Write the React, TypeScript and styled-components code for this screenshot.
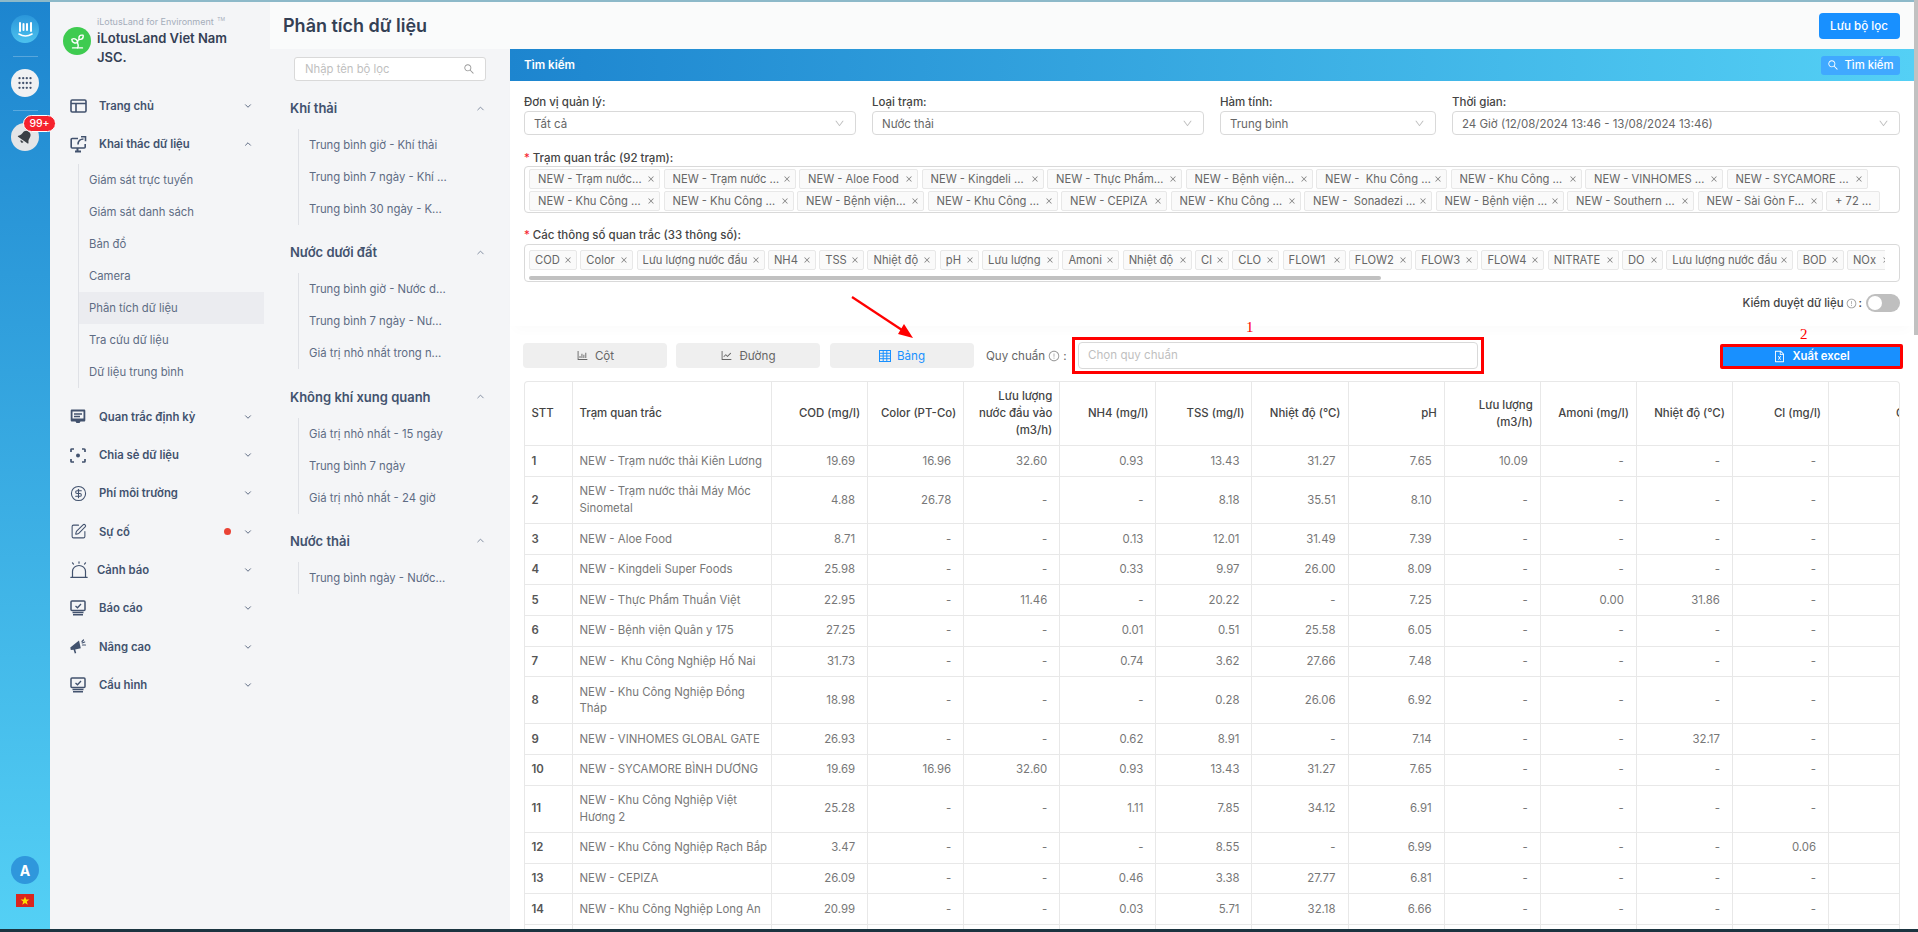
import React from "react";
import styled, { createGlobalStyle } from "styled-components";
import { ChevronDown, ChevronUp, CircleDollarSign, SquarePen, Sprout } from "lucide-react";
import {
  AiOutlineBarChart,
  AiOutlineLineChart,
  AiOutlineSearch,
  AiOutlineClose,
  AiOutlineDown,
  AiOutlineExclamationCircle,
  AiOutlineFileExcel,
} from "react-icons/ai";

const GlobalStyle = createGlobalStyle`
  html, body { margin: 0; padding: 0; height: 100%; overflow: hidden; background: #fff; }
  body { font-family: Inter, "Noto Sans", sans-serif; font-size: 11.6px; color: #444; }
  * { box-sizing: border-box; }
`;

const Page = styled.div`
  position: relative;
  width: 1918px;
  height: 932px;
  display: flex;
  flex-direction: column;
  overflow: hidden;
`;
const TopLine = styled.div`height: 2px; background: #8db9c9; flex: none;`;
const BottomLine = styled.div`height: 3px; background: #1b3440; flex: none;`;
const Body = styled.div`flex: 1; min-height: 0; display: flex;`;

/* ---------- rail ---------- */
const Rail = styled.nav`
  width: 50px;
  flex: none;
  display: flex;
  flex-direction: column;
  align-items: center;
  padding: 13px 0 22px;
  background: linear-gradient(180deg, #1d85cf 0%, #54d0f5 100%);
`;
const RailCircle = styled.div<{ $bg: string }>`
  position: relative;
  width: 28px;
  height: 28px;
  border-radius: 50%;
  background: ${(p) => p.$bg};
  display: flex;
  align-items: center;
  justify-content: center;
  color: #fff;
  font-weight: 700;
  font-size: 14px;
  flex: none;
`;
const RailDivider = styled.div`
  width: 25px;
  height: 1px;
  margin: 13px 0 12px;
  background: rgba(255, 255, 255, 0.25);
`;
const Badge = styled.span`
  position: absolute;
  left: 12px;
  top: -8px;
  width: 33px;
  height: 17px;
  border-radius: 9px;
  background: #f5222d;
  border: 1px solid #fff;
  color: #fff;
  font-size: 10.5px;
  font-weight: 500;
  line-height: 15px;
  text-align: center;
`;
const RailBottom = styled.div`
  margin-top: auto;
  display: flex;
  flex-direction: column;
  align-items: center;
  gap: 10px;
`;

/* ---------- sidebar ---------- */
const Sidebar = styled.aside`
  width: 220px;
  flex: none;
  background: #f4f5f7;
  display: flex;
  flex-direction: column;
`;
const Brand = styled.div`
  display: flex;
  align-items: center;
  gap: 6px;
  padding: 13px 0 0 13px;
  height: 65px;
  margin-bottom: 20px;
`;
const BrandLogo = styled.div`
  width: 28px;
  height: 28px;
  border-radius: 50%;
  background: #3ecb50;
  display: flex;
  align-items: center;
  justify-content: center;
  color: #fff;
  flex: none;
`;
const BrandText = styled.div`display: flex; flex-direction: column;`;
const BrandTag = styled.div`
  font-size: 9px;
  line-height: 14px;
  color: #a5adba;
  white-space: nowrap;
  sup { font-size: 5px; line-height: 0; margin-left: 1px; }
`;
const BrandName = styled.div`
  font-size: 13px;
  font-weight: 600;
  line-height: 19px;
  color: #344054;
  width: 150px;
`;
const MenuRow = styled.div`
  height: 38.3px;
  display: flex;
  align-items: center;
  padding: 0 20px;
  color: #42526e;
`;
const MenuIcon = styled.span<{ $w?: number }>`
  width: ${(p) => p.$w ?? 29}px;
  flex: none;
  display: flex;
  align-items: center;
`;
const MenuLabel = styled.span`
  flex: 1;
  font-size: 11.3px;
  font-weight: 600;
  color: #42526e;
  white-space: nowrap;
`;
const Dot = styled.span`
  width: 7px;
  height: 7px;
  border-radius: 50%;
  background: #ea4335;
  margin-right: 12px;
`;
const Chevron = styled.span`
  display: flex;
  color: #42526e;
  margin-right: -3px;
`;
const SubList = styled.div`
  margin: 0 6px 10px 28px;
  border-left: 1px solid #dfe1e6;
`;
const SubItem = styled.div<{ $active?: boolean }>`
  height: 32px;
  line-height: 32px;
  padding-left: 10px;
  font-size: 11.3px;
  color: #5e6c84;
  background: ${(p) => (p.$active ? "#ebecf0" : "transparent")};
  white-space: nowrap;
`;

/* ---------- content ---------- */
const Content = styled.div`flex: 1; min-width: 0; display: flex; flex-direction: column;`;
const Header = styled.header`
  height: 47px;
  flex: none;
  display: flex;
  align-items: center;
  justify-content: space-between;
  padding: 0 18.5px 0 13px;
  background: #fafbfb;
`;
const Title = styled.h1`
  margin: 0;
  font-size: 18px;
  font-weight: 600;
  color: #344054;
`;
const PrimaryButton = styled.button`
  width: 81px;
  height: 26px;
  border: 0;
  border-radius: 4px;
  background: #1890ff;
  color: #fff;
  font: 500 11.6px Inter, sans-serif;
`;
const Columns = styled.div`flex: 1; min-height: 0; display: flex;`;
const FilterColumn = styled.section`
  width: 240px;
  flex: none;
  background: #f4f5f7;
  padding: 8px 24px 0;
`;
const FilterSearch = styled.div`
  height: 24px;
  display: flex;
  align-items: center;
  justify-content: space-between;
  padding: 0 10px;
  background: #fff;
  border: 1px solid #d9d9d9;
  border-radius: 3px;
  font-size: 11.3px;
  color: #bfbfbf;
  margin-bottom: 17px;
`;
const GroupHead = styled.div`
  height: 20px;
  margin: 0 0 11px -4px;
  display: flex;
  align-items: center;
  justify-content: space-between;
  font-size: 13px;
  font-weight: 600;
  color: #42526e;
`;
const GroupList = styled.div`
  margin: 0 0 17.3px 4px;
  border-left: 1px solid #dfe1e6;
`;
const GroupItem = styled.div`
  height: 32px;
  line-height: 32px;
  margin-left: 10px;
  width: 139px;
  font-size: 11.3px;
  color: #5e6c84;
  white-space: nowrap;
  overflow: hidden;
  text-overflow: ellipsis;
`;

/* ---------- main ---------- */
const Main = styled.main`
  width: 1404px;
  flex: none;
  display: flex;
  flex-direction: column;
  background: #fff;
  min-height: 0;
`;
const Card = styled.section`
  flex: none;
  height: 277px;
  box-shadow: 0 8px 12px -4px rgba(0, 0, 0, 0.02);
`;
const Band = styled.div`
  height: 32px;
  display: flex;
  align-items: center;
  justify-content: space-between;
  padding: 0 14px;
  background: linear-gradient(90deg, #1d85cf 0%, #54d0f5 100%);
  color: #fff;
  font-weight: 600;
  font-size: 11.6px;
`;
const BandButton = styled.button`
  width: 79px;
  height: 19px;
  border: 0;
  border-radius: 3px;
  background: #40a9ff;
  color: #fff;
  display: flex;
  align-items: center;
  justify-content: center;
  gap: 5px;
  white-space: nowrap;
  font: 500 11.3px Inter, sans-serif;
`;
const CardBody = styled.div`padding: 14px 14px 0;`;
const FilterGrid = styled.div`
  display: grid;
  grid-template-columns: 332px 332px 216px 448px;
  column-gap: 16px;
  margin-bottom: 16px;
`;
const Label = styled.div<{ $mb?: number }>`
  height: 14px;
  line-height: 14px;
  font-size: 11.5px;
  font-weight: 500;
  color: #444;
  margin-bottom: ${(p) => p.$mb ?? 2}px;
  white-space: nowrap;
  b { color: #f5222d; font-weight: 400; margin-right: 3px; }
`;
const Select = styled.div`
  height: 24px;
  display: flex;
  align-items: center;
  justify-content: space-between;
  padding: 1px 10px 0 9px;
  border: 1px solid #d9d9d9;
  border-radius: 4px;
  font-size: 11.5px;
  color: #666;
  svg { color: #bfbfbf; }
`;
const StationBox = styled.div`
  height: 47px;
  padding: 2px 0 0 4px;
  border: 1px solid #d9d9d9;
  border-radius: 4px;
  margin-bottom: 15px;
  display: flex;
  flex-wrap: wrap;
  column-gap: 3.5px;
  row-gap: 2px;
  align-content: flex-start;
`;
const Tag = styled.span<{ $w: number; $station?: boolean }>`
  width: ${(p) => p.$w}px;
  height: 20px;
  flex: none;
  display: flex;
  align-items: center;
  gap: 3px;
  padding: ${(p) => (p.$station ? "0 4px 0 8px" : "0 4px 0 5px")};
  background: #fafafa;
  border: 1px solid #e8e8e8;
  border-radius: 2px;
  font-size: 11.2px;
  color: #666;
  svg { flex: none; color: #777; }
`;
const TagText = styled.span<{ $clip?: boolean }>`
  flex: 1;
  min-width: 0;
  white-space: pre;
  overflow: hidden;
  text-overflow: ${(p) => (p.$clip ? "clip" : "ellipsis")};
`;
const ParamBox = styled.div`
  height: 38px;
  padding: 5px 14px 0 4px;
  border: 1px solid #d9d9d9;
  border-radius: 4px;
`;
const ParamRow = styled.div`
  display: flex;
  gap: 3.3px;
  overflow: hidden;
  height: 20px;
`;
const ScrollBar = styled.div`
  width: 852px;
  height: 4px;
  margin-top: 6px;
  background: #c1c1c1;
  border-radius: 2px;
`;
const ToggleRow = styled.div`
  margin-top: 12px;
  height: 18px;
  display: flex;
  align-items: center;
  justify-content: flex-end;
  gap: 2px;
  font-size: 11.4px;
  font-weight: 500;
  color: #444;
  svg { color: #999; }
`;
const Toggle = styled.span`
  width: 34px;
  height: 18px;
  border-radius: 9px;
  background: #bfbfbf;
  margin-left: 2px;
  padding: 2px;
  span { display: block; width: 14px; height: 14px; border-radius: 50%; background: #fff; }
`;
const ToolsRow = styled.div`
  flex: none;
  height: 37px;
  margin: 11px 14px 7px 13px;
  display: flex;
  align-items: center;
`;
const TabButton = styled.button<{ $active?: boolean; $mr: number }>`
  width: 144px;
  height: 25px;
  margin-right: ${(p) => p.$mr}px;
  border: 0;
  border-radius: 4px;
  background: #efefef;
  color: ${(p) => (p.$active ? "#1890ff" : "#666")};
  display: flex;
  align-items: center;
  justify-content: center;
  gap: 6px;
  font: 400 11.6px Inter, sans-serif;
`;
const RuleLabel = styled.span`
  display: flex;
  align-items: center;
  gap: 3px;
  width: 86px;
  font-size: 11.6px;
  color: #666;
  white-space: nowrap;
  svg { color: #999; }
`;
const RedBox = styled.div`
  width: 412px;
  height: 37px;
  border: 3px solid #f00;
  padding: 2px 3px;
`;
const RuleInput = styled.div`
  height: 27px;
  line-height: 25px;
  padding-left: 9px;
  border: 1px solid #d9d9d9;
  border-radius: 4px;
  font-size: 11.6px;
  color: #bfbfbf;
`;
const ExportButton = styled.button`
  width: 183px;
  height: 25px;
  margin: 1px -3px 0 auto;
  border: 3px solid #f00;
  border-radius: 2px;
  background: #1890ff;
  color: #fff;
  display: flex;
  align-items: center;
  justify-content: center;
  gap: 6px;
  font: 600 11.3px Inter, sans-serif;
`;
const TableWrap = styled.div`
  flex: 1;
  min-height: 0;
  margin: 0 14px 0 13.5px;
  overflow: hidden;
  border-right: 1px solid #e8e8e8;
  border-left: 1px solid #e8e8e8;
  border-top: 1px solid #e8e8e8;
  border-radius: 4px 4px 0 0;
`;
const Table = styled.table`
  width: 1438px;
  table-layout: fixed;
  border-collapse: separate;
  border-spacing: 0;
  font-size: 11.4px;
`;
const Col = styled.col<{ $w: number }>`width: ${(p) => p.$w}px;`;
const Th = styled.th<{ $left?: boolean }>`
  padding: 6.4px 7px;
  line-height: 16.8px;
  font-weight: 500;
  color: #444;
  text-align: ${(p) => (p.$left ? "left" : "right")};
  border-right: 1px solid #e8e8e8;
  border-bottom: 1px solid #e8e8e8;
`;
const Td = styled.td<{ $kind?: "stt" | "name" | "num" }>`
  padding: 6.4px ${(p) => (p.$kind === "num" || !p.$kind ? "12px" : "2px")} 6.4px 7px;
  height: 30.6px;
  line-height: 16.8px;
  color: ${(p) => (p.$kind === "stt" ? "#555" : "#777")};
  font-weight: ${(p) => (p.$kind === "stt" ? 600 : 400)};
  text-align: ${(p) => (p.$kind === "stt" || p.$kind === "name" ? "left" : "right")};
  white-space: pre-wrap;
  border-right: 1px solid #e8e8e8;
  border-bottom: 1px solid #e8e8e8;
`;

/* ---------- overlays ---------- */
const ScrollThumb = styled.div`
  position: absolute;
  right: 0;
  top: 0;
  width: 4.5px;
  height: 335px;
  background: #c1c1c1;
`;
const Arrow = styled.svg`
  position: absolute;
  left: 845px;
  top: 290px;
`;
const Note = styled.span<{ $x: number; $y: number }>`
  position: absolute;
  left: ${(p) => p.$x}px;
  top: ${(p) => p.$y}px;
  color: #f00;
  font: 15px/14px "Liberation Serif", serif;
`;

/* ---------- drawings ---------- */
const LogoMark = () => (
  <svg width="17" height="17" viewBox="0 0 17 17" fill="none" stroke="#fff" strokeLinecap="round">
    <path d="M3 2v8M6.5 3v6M10 3v6M14 2v8" strokeWidth="2" />
    <path d="M2 13c4 2.500 9 2.500 13 0" strokeWidth="1.600" />
  </svg>
);
const AppsMark = () => (
  <svg width="14" height="12" viewBox="0 0 14 12" fill="#42526e">
    {[1.200, 6, 10.800].map((y) =>
      [1.500, 5.200, 8.800, 12.500].map((x) => <circle key={`${x}-${y}`} cx={x} cy={y} r="1.150" />)
    )}
  </svg>
);
const BellMark = () => (
  <svg width="16" height="16" viewBox="0 0 16 16" fill="#3a3f45">
    <g transform="rotate(35 8 8)">
      <path d="M8 1.500c-2.800 0-4.300 2-4.300 4.600 0 2.600-1.200 3.800-2 4.700v.9h12.600v-.9c-.8-.9-2-2.100-2-4.700 0-2.600-1.500-4.600-4.300-4.600z" />
      <path d="M6.300 13h3.400c0 1-.8 1.600-1.700 1.600S6.300 14 6.300 13z" />
    </g>
  </svg>
);
const Flag = () => (
  <svg width="18" height="13" viewBox="0 0 18 13">
    <rect width="18" height="13" fill="#da251d" />
    <polygon fill="#ffdd00" points="9,2.500 10.150,5.600 13.400,5.600 10.800,7.600 11.700,10.800 9,8.900 6.300,10.800 7.200,7.600 4.600,5.600 7.850,5.600" />
  </svg>
);
const ic = { fill: "none", stroke: "#42526e", strokeWidth: 1.600 };
const HomeIcon = () => (
  <svg width="17" height="14" viewBox="0 0 17 14" {...ic}>
    <rect x="1" y="1" width="15" height="12" rx="1.200" />
    <path d="M1 4.500h15M6 4.500V13" />
  </svg>
);
const ShareIcon = () => (
  <svg width="17" height="17" viewBox="0 0 17 17" {...ic}>
    <path d="M8 2.500H2.200c-.6 0-1 .4-1 1v7.500c0 .6.4 1 1 1h12c.6 0 1-.4 1-1V8" />
    <path d="M8 8.500C8 5 10.500 3 13.500 3M11 .8h4.500v4.500" />
    <path d="M7.500 12v2.500M5 15.500h6" strokeWidth="2" />
  </svg>
);
const ReportIcon = () => (
  <svg width="16" height="15" viewBox="0 0 16 15">
    <path fill="#42526e" fillRule="evenodd" d="M2 .5h12c.8 0 1.300.5 1.300 1.300v9.400c0 .8-.5 1.300-1.300 1.300h-3.500l-1 1.500h-3l-1-1.500H2c-.8 0-1.300-.5-1.300-1.300V1.800C.7 1 1.200.5 2 .5zm.5 2V9.500h11v-7z" />
    <path stroke="#42526e" strokeWidth="1.500" d="M4 5h8M4 7.500h6" />
  </svg>
);
const FocusIcon = () => (
  <svg width="16" height="15" viewBox="0 0 16 15" fill="none" stroke="#42526e" strokeWidth="1.700">
    <path d="M1 4V1.800c0-.5.3-.8.8-.8H4M12 1h2.200c.5 0 .8.3.8.8V4M15 11v2.200c0 .5-.3.8-.8.8H12M4 14H1.800c-.5 0-.8-.3-.8-.8V11" />
    <circle cx="8" cy="7.500" r="2" fill="#42526e" stroke="none" />
  </svg>
);
const AlarmIcon = () => (
  <svg width="18" height="17" viewBox="0 0 18 17" fill="none" stroke="#42526e" strokeWidth="1.200" strokeLinecap="round">
    <path d="M.8 16.300h16.400M2.500 16.300v-6C2.500 7 5.500 4.500 9 4.500s6.500 2.500 6.500 5.800v6" />
    <path d="M9 .8v1.400M2.500 1.800l1 1.300M15.500 1.800l-1 1.300" />
  </svg>
);
const DeskIcon = () => (
  <svg width="16" height="16" viewBox="0 0 16 16" fill="none" stroke="#42526e">
    <rect x="1" y="1" width="14" height="9.500" rx="1" strokeWidth="1.500" />
    <path d="M5.500 6l2 1.800L11 4" strokeWidth="1.300" />
    <path d="M2.500 12.500h11M3 14.800h10" strokeWidth="1.500" />
  </svg>
);
const MegaIcon = () => (
  <svg width="17" height="16" viewBox="0 0 17 16">
    <path fill="#42526e" d="M.3 8.500L9 1.500l1.800 7.700-5.600 1.200 1 3.600-1.400.4-1.200-3.700L.8 11z" />
    <path stroke="#42526e" strokeWidth="1.200" fill="none" strokeLinecap="round" d="M12 2.500l1.500-1.500M12.500 6h3M12.200 4l2.500-1" />
  </svg>
);
const GridIcon = () => (
  <svg width="12" height="12" viewBox="0 0 12 12" fill="none" stroke="#1890ff">
    <rect x=".5" y=".5" width="11" height="11" />
    <path d="M.5 3.300h11M.5 6h11M.5 8.700h11M4.200.5v11M7.800.5v11" />
  </svg>
);

/* ---------- data ---------- */
const stationRows: [string, number][] = [
  ["NEW - Trạm nước thải Kiên Lương", 131],
  ["NEW - Trạm nước thải Máy Móc Sinometal", 132],
  ["NEW - Aloe Food", 119],
  ["NEW - Kingdeli Super Foods", 122],
  ["NEW - Thực Phẩm Thuần Việt", 135],
  ["NEW - Bệnh viện Quân y 175", 127],
  ["NEW -  Khu Công Nghiệp Hố Nai", 131],
  ["NEW - Khu Công Nghiệp Đồng Tháp", 131],
  ["NEW - VINHOMES GLOBAL GATE", 138],
  ["NEW - SYCAMORE BÌNH DƯƠNG", 141],
  ["NEW - Khu Công Nghiệp Việt Hương 2", 131],
  ["NEW - Khu Công Nghiệp Rạch Bắp", 130],
  ["NEW - Bệnh viện Đa khoa", 127],
  ["NEW - Khu Công Nghiệp Long An", 130],
  ["NEW - CEPIZA", 106],
  ["NEW - Khu Công Nghiệp Nam Tân Uyên", 130],
  ["NEW -  Sonadezi Long Thành", 128],
  ["NEW - Bệnh viện Chợ Rẫy", 128],
  ["NEW - Southern Gateway", 127],
  ["NEW - Sài Gòn Food", 125],
];
const params: [string, number][] = [
  ["COD", 48], ["Color", 53], ["Lưu lượng nước đầu vào", 128], ["NH4", 48], ["TSS", 45],
  ["Nhiệt độ", 69], ["pH", 39], ["Lưu lượng", 77], ["Amoni", 57], ["Nhiệt độ", 69],
  ["Cl", 34], ["CLO", 47], ["FLOW1", 63], ["FLOW2", 63], ["FLOW3", 63], ["FLOW4", 63],
  ["NITRATE", 71], ["DO", 41], ["Lưu lượng nước đầu vào", 127], ["BOD", 47], ["NOx", 48],
];
const headers = [
  "COD (mg/l)", "Color (PT-Co)", "Lưu lượng nước đầu vào (m3/h)", "NH4 (mg/l)", "TSS (mg/l)",
  "Nhiệt độ (°C)", "pH", "Lưu lượng (m3/h)", "Amoni (mg/l)", "Nhiệt độ (℃)", "Cl (mg/l)", "CLO (mg/l)",
];
const rows: string[] = [
  "NEW - Trạm nước thải Kiên Lương|19.69|16.96|32.60|0.93|13.43|31.27|7.65|10.09|-|-|-|-",
  "NEW - Trạm nước thải Máy Móc Sinometal|4.88|26.78|-|-|8.18|35.51|8.10|-|-|-|-|-",
  "NEW - Aloe Food|8.71|-|-|0.13|12.01|31.49|7.39|-|-|-|-|-",
  "NEW - Kingdeli Super Foods|25.98|-|-|0.33|9.97|26.00|8.09|-|-|-|-|-",
  "NEW - Thực Phẩm Thuần Việt|22.95|-|11.46|-|20.22|-|7.25|-|0.00|31.86|-|-",
  "NEW - Bệnh viện Quân y 175|27.25|-|-|0.01|0.51|25.58|6.05|-|-|-|-|-",
  "NEW -  Khu Công Nghiệp Hố Nai|31.73|-|-|0.74|3.62|27.66|7.48|-|-|-|-|-",
  "NEW - Khu Công Nghiệp Đồng Tháp|18.98|-|-|-|0.28|26.06|6.92|-|-|-|-|-",
  "NEW - VINHOMES GLOBAL GATE|26.93|-|-|0.62|8.91|-|7.14|-|-|32.17|-|-",
  "NEW - SYCAMORE BÌNH DƯƠNG|19.69|16.96|32.60|0.93|13.43|31.27|7.65|-|-|-|-|-",
  "NEW - Khu Công Nghiệp Việt Hương 2|25.28|-|-|1.11|7.85|34.12|6.91|-|-|-|-|-",
  "NEW - Khu Công Nghiệp Rạch Bắp|3.47|-|-|-|8.55|-|6.99|-|-|-|0.06|-",
  "NEW - CEPIZA|26.09|-|-|0.46|3.38|27.77|6.81|-|-|-|-|-",
  "NEW - Khu Công Nghiệp Long An|20.99|-|-|0.03|5.71|32.18|6.66|-|-|-|-|-",
  "|||||||||||",
];
const menuTop: [React.ReactNode, string][] = [
  [<ReportIcon />, "Quan trắc định kỳ"],
  [<FocusIcon />, "Chia sẻ dữ liệu"],
  [<CircleDollarSign size={17} strokeWidth={1.500} />, "Phí môi trường"],
  [<SquarePen size={17} strokeWidth={1.500} />, "Sự cố"],
  [<AlarmIcon />, "Cảnh báo"],
  [<DeskIcon />, "Báo cáo"],
  [<MegaIcon />, "Nâng cao"],
  [<DeskIcon />, "Cấu hình"],
];
const subItems = ["Giám sát trực tuyến", "Giám sát danh sách", "Bản đồ", "Camera", "Phân tích dữ liệu", "Tra cứu dữ liệu", "Dữ liệu trung bình"];
const groups: [string, string[]][] = [
  ["Khí thải", ["Trung bình giờ - Khí thải", "Trung bình 7 ngày - Khí thải", "Trung bình 30 ngày - Khí thải"]],
  ["Nước dưới đất", ["Trung bình giờ - Nước dưới đất", "Trung bình 7 ngày - Nước dưới đất", "Giá trị nhỏ nhất trong ngày"]],
  ["Không khí xung quanh", ["Giá trị nhỏ nhất - 15 ngày", "Trung bình 7 ngày", "Giá trị nhỏ nhất - 24 giờ"]],
  ["Nước thải", ["Trung bình ngày - Nước thải"]],
];
const selects: [string, string][] = [
  ["Đơn vị quản lý:", "Tất cả"],
  ["Loại trạm:", "Nước thải"],
  ["Hàm tính:", "Trung bình"],
  ["Thời gian:", "24 Giờ (12/08/2024 13:46 - 13/08/2024 13:46)"],
];

export default function App() {
  return (
    <Page>
      <GlobalStyle />
      <TopLine />
      <Body>
        <Rail>
          <RailCircle $bg="linear-gradient(180deg,#2a96da,#4dc2ee)"><LogoMark /></RailCircle>
          <RailDivider />
          <RailCircle $bg="#f0f1f3"><AppsMark /></RailCircle>
          <RailDivider />
          <RailCircle $bg="#e4e5e7">
            <BellMark />
            <Badge>99+</Badge>
          </RailCircle>
          <RailBottom>
            <RailCircle $bg="#2f97dc">A</RailCircle>
            <Flag />
          </RailBottom>
        </Rail>

        <Sidebar>
          <Brand>
            <BrandLogo><Sprout size={17} strokeWidth={2} /></BrandLogo>
            <BrandText>
              <BrandTag>iLotusLand for Environment <sup>TM</sup></BrandTag>
              <BrandName>iLotusLand Viet Nam JSC.</BrandName>
            </BrandText>
          </Brand>
          <MenuRow>
            <MenuIcon><HomeIcon /></MenuIcon>
            <MenuLabel>Trang chủ</MenuLabel>
            <Chevron><ChevronDown size={10} /></Chevron>
          </MenuRow>
          <MenuRow>
            <MenuIcon><ShareIcon /></MenuIcon>
            <MenuLabel>Khai thác dữ liệu</MenuLabel>
            <Chevron><ChevronUp size={10} /></Chevron>
          </MenuRow>
          <SubList>
            {subItems.map((s) => (
              <SubItem key={s} $active={s === "Phân tích dữ liệu"}>{s}</SubItem>
            ))}
          </SubList>
          {menuTop.map(([icon, label]) => (
            <MenuRow key={label}>
              <MenuIcon $w={label === "Cảnh báo" ? 27 : 29}>{icon}</MenuIcon>
              <MenuLabel>{label}</MenuLabel>
              {label === "Sự cố" && <Dot />}
              <Chevron><ChevronDown size={10} /></Chevron>
            </MenuRow>
          ))}
        </Sidebar>

        <Content>
          <Header>
            <Title>Phân tích dữ liệu</Title>
            <PrimaryButton>Lưu bộ lọc</PrimaryButton>
          </Header>
          <Columns>
            <FilterColumn>
              <FilterSearch>
                Nhập tên bộ lọc
                <AiOutlineSearch size={12} color="#999" />
              </FilterSearch>
              {groups.map(([head, items]) => (
                <React.Fragment key={head}>
                  <GroupHead>
                    {head}
                    <ChevronUp size={11} color="#7a869a" />
                  </GroupHead>
                  <GroupList>
                    {items.map((i) => <GroupItem key={i}>{i}</GroupItem>)}
                  </GroupList>
                </React.Fragment>
              ))}
            </FilterColumn>

            <Main>
              <Card>
                <Band>
                  Tìm kiếm
                  <BandButton><AiOutlineSearch size={12} />Tìm kiếm</BandButton>
                </Band>
                <CardBody>
                  <FilterGrid>
                    {selects.map(([label, value]) => (
                      <div key={label}>
                        <Label>{label}</Label>
                        <Select>{value}<AiOutlineDown size={11} /></Select>
                      </div>
                    ))}
                  </FilterGrid>
                  <Label $mb={1}><b>*</b>Trạm quan trắc (92 trạm):</Label>
                  <StationBox>
                    {stationRows.map(([t, w]) => (
                      <Tag key={t} $w={w} $station>
                        <TagText>{t}</TagText>
                        <AiOutlineClose size={8} />
                      </Tag>
                    ))}
                    <Tag $w={54} $station><TagText>+ 72 ...</TagText></Tag>
                  </StationBox>
                  <Label><b>*</b>Các thông số quan trắc (33 thông số):</Label>
                  <ParamBox>
                    <ParamRow>
                      {params.map(([t, w], i) => (
                        <Tag key={i} $w={w}>
                          <TagText $clip>{t}</TagText>
                          <AiOutlineClose size={8} />
                        </Tag>
                      ))}
                    </ParamRow>
                    <ScrollBar />
                  </ParamBox>
                  <ToggleRow>
                    Kiểm duyệt dữ liệu
                    <AiOutlineExclamationCircle size={11} />
                    :
                    <Toggle><span /></Toggle>
                  </ToggleRow>
                </CardBody>
              </Card>

              <ToolsRow>
                <TabButton $mr={9}><AiOutlineBarChart size={13} />Cột</TabButton>
                <TabButton $mr={10}><AiOutlineLineChart size={13} />Đường</TabButton>
                <TabButton $mr={12} $active><GridIcon />Bảng</TabButton>
                <RuleLabel>Quy chuẩn <AiOutlineExclamationCircle size={12} /> :</RuleLabel>
                <RedBox><RuleInput>Chọn quy chuẩn</RuleInput></RedBox>
                <ExportButton><AiOutlineFileExcel size={13} />Xuất excel</ExportButton>
              </ToolsRow>

              <TableWrap>
                <Table>
                  <colgroup>
                    <Col $w={48} />
                    <Col $w={199.5} />
                    {headers.map((h, i) => <Col key={h} $w={i === 11 ? 134 : 96.1} />)}
                  </colgroup>
                  <thead>
                    <tr>
                      <Th $left>STT</Th>
                      <Th $left>Trạm quan trắc</Th>
                      {headers.map((h) => <Th key={h}>{h}</Th>)}
                    </tr>
                  </thead>
                  <tbody>
                    {rows.map((r, i) => {
                      const [name, ...vals] = r.split("|");
                      return (
                        <tr key={i}>
                          <Td $kind="stt">{name ? i + 1 : ""}</Td>
                          <Td $kind="name">{name}</Td>
                          {vals.map((v, j) => <Td key={j} $kind="num">{v}</Td>)}
                        </tr>
                      );
                    })}
                  </tbody>
                </Table>
              </TableWrap>
            </Main>
          </Columns>
        </Content>
      </Body>
      <BottomLine />

      <ScrollThumb />
      <Arrow width="75" height="55" viewBox="0 0 75 55">
        <path d="M7 7L60 42" stroke="#f00" strokeWidth="2.200" />
        <polygon points="68,48 53,44 59,34" fill="#f00" />
      </Arrow>
      <Note $x={1246} $y={320}>1</Note>
      <Note $x={1800} $y={327}>2</Note>
    </Page>
  );
}
